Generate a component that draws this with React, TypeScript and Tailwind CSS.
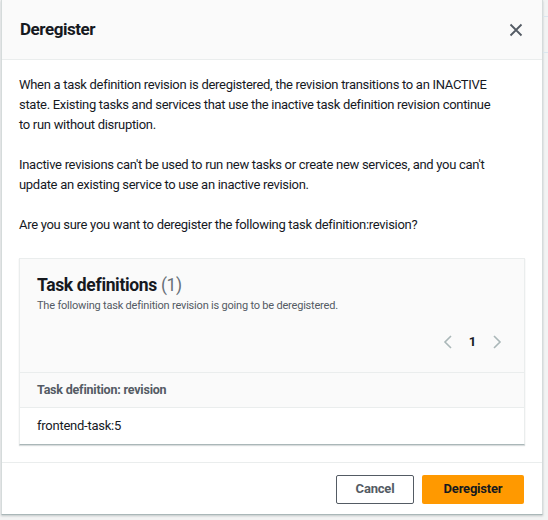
export default function App() {
  const font = { fontFamily: "Roboto, 'Noto Sans', Arial, sans-serif" };
  return (
    <div className="w-[548px] h-[520px] bg-[#f2f3f3] flex overflow-hidden" style={font}>
      <div className="w-[1px] shrink-0" />
      <div className="w-[542px] h-[515px] shrink-0 flex flex-col bg-white border-x border-b border-x-[#d5dbdb] border-b-[#aab7b8] shadow-[0_1px_2px_rgba(0,28,36,0.2)]">
        {/* Header */}
        <div className="h-[60px] shrink-0 bg-[#fafafa] border-b border-[#eaeded] flex items-center justify-between pl-[18px] pr-[19px]">
          <h2 className="text-[17px] font-bold tracking-[-0.45px] text-[#16191f] leading-[22px] -mt-[1px]">Deregister</h2>
          <svg width="14" height="14" viewBox="0 0 14 14" className="text-[#545b64]">
            <path d="M1.5 1.5 L12.5 12.5 M12.5 1.5 L1.5 12.5" stroke="currentColor" strokeWidth="1.8" fill="none" />
          </svg>
        </div>
        {/* Body */}
        <div className="flex-1 px-[17px] pt-[15px] text-[13px] tracking-[-0.3px] leading-[20px] text-[#16191f]">
          <p className="mb-[20px] w-[478px]">
            When a task definition revision is deregistered, the revision transitions to an INACTIVE state. Existing tasks and services that use the inactive task definition revision continue to run without disruption.
          </p>
          <p className="mb-[20px] w-[478px]">
            Inactive revisions can't be used to run new tasks or create new services, and you can't update an existing service to use an inactive revision.
          </p>
          <p>Are you sure you want to deregister the following task definition:revision?</p>
          {/* Card */}
          <div className="mt-[23px] border border-[#eaeded] border-b-[#aab7b8] shadow-[0_1px_1px_rgba(0,28,36,0.15)] bg-white">
            <div className="bg-[#fafafa] border-b border-[#eaeded] h-[114px] px-[17px] pt-[15px] flex flex-col">
              <div className="text-[17.5px] leading-[22px] tracking-[-0.35px]">
                <span className="font-bold text-[#16191f]">Task definitions</span>{" "}
                <span className="text-[#687078]">(1)</span>
              </div>
              <div className="text-[11px] leading-[16px] tracking-[-0.2px] text-[#545b64] mt-[2px]">
                The following task definition revision is going to be deregistered.
              </div>
              <div className="flex items-center justify-end gap-[12px] mt-[18px] pr-[5px] h-[20px]">
                <svg width="10" height="16" viewBox="0 0 10 16">
                  <path d="M8 2 L2 8 L8 14" stroke="#aab7b8" strokeWidth="1.6" fill="none" />
                </svg>
                <span className="text-[13px] font-bold text-[#16191f] px-[4px]">1</span>
                <svg width="10" height="16" viewBox="0 0 10 16">
                  <path d="M2 2 L8 8 L2 14" stroke="#aab7b8" strokeWidth="1.6" fill="none" />
                </svg>
              </div>
            </div>
            <div className="bg-[#fafafa] border-b border-[#eaeded] h-[35px] flex items-center px-[17px]">
              <span className="text-[12.5px] font-bold tracking-[-0.2px] text-[#545b64]">Task definition: revision</span>
            </div>
            <div className="h-[36px] flex items-center px-[17px] text-[13px] tracking-[-0.25px] text-[#16191f]">
              frontend-task:5
            </div>
          </div>
        </div>
        {/* Footer */}
        <div className="h-[52px] shrink-0 border-t border-[#eaeded] flex items-center justify-end gap-[8px] pr-[18px] pt-[1px]">
          <button className="w-[78px] h-[29px] border border-[#545b64] rounded-[2px] bg-white text-[13px] font-bold text-[#545b64] tracking-[-0.2px]">
            Cancel
          </button>
          <button className="w-[102px] h-[29px] rounded-[2px] bg-[#ff9900] text-[13px] font-bold text-[#16191f] tracking-[-0.2px]">
            Deregister
          </button>
        </div>
      </div>
      <div className="flex-1 flex flex-col">
        <div className="h-[16px]" />
        <div className="h-[1px] bg-[#dbe6ee]" />
        <div className="h-[35px]" />
        <div className="h-[1px] bg-[#dbe6ee]" />
      </div>
    </div>
  );
}
